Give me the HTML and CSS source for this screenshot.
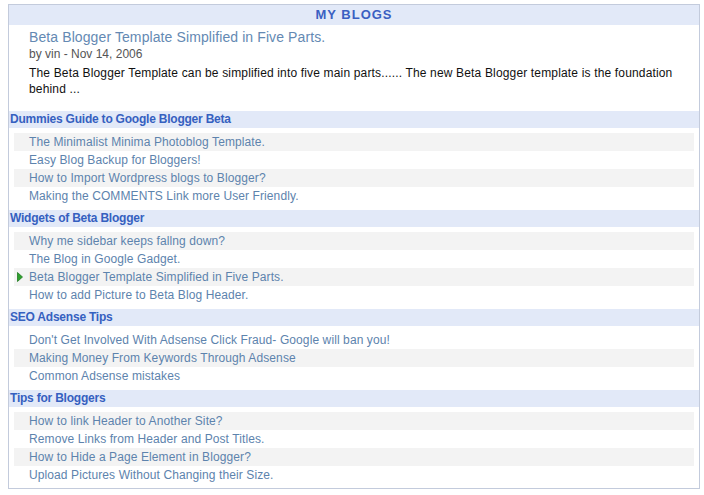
FILE: index.html
```html
<!DOCTYPE html>
<html>
<head>
<meta charset="utf-8">
<link rel="stylesheet" href="styles.css">
</head>
<body>
<div class="box">
  <div class="title-bar">MY BLOGS</div>
  <div class="post">
    <div class="post-title">Beta Blogger Template Simplified in Five Parts.</div>
    <div class="post-meta">by vin - Nov 14, 2006</div>
    <div class="post-desc">The Beta Blogger Template can be simplified into five main parts...... The new Beta Blogger template is the foundation behind ...</div>
  </div>

  <div class="section">
    <div class="sec-head">Dummies Guide to Google Blogger Beta</div>
    <ul class="items">
      <li class="alt">The Minimalist Minima Photoblog Template.</li>
      <li>Easy Blog Backup for Bloggers!</li>
      <li class="alt">How to Import Wordpress blogs to Blogger?</li>
      <li>Making the COMMENTS Link more User Friendly.</li>
    </ul>
  </div>

  <div class="section">
    <div class="sec-head">Widgets of Beta Blogger</div>
    <ul class="items">
      <li class="alt">Why me sidebar keeps fallng down?</li>
      <li>The Blog in Google Gadget.</li>
      <li class="alt current"><svg class="arrow" width="6" height="10" viewBox="0 0 6 10"><polygon points="0.5,0.5 5.5,5 0.5,9.5" fill="#2ea02e" stroke="#1f7a1f" stroke-width="0.8"/></svg>Beta Blogger Template Simplified in Five Parts.</li>
      <li>How to add Picture to Beta Blog Header.</li>
    </ul>
  </div>

  <div class="section">
    <div class="sec-head">SEO Adsense Tips</div>
    <ul class="items">
      <li>Don't Get Involved With Adsense Click Fraud- Google will ban you!</li>
      <li class="alt">Making Money From Keywords Through Adsense</li>
      <li>Common Adsense mistakes</li>
    </ul>
  </div>

  <div class="section">
    <div class="sec-head">Tips for Bloggers</div>
    <ul class="items">
      <li class="alt">How to link Header to Another Site?</li>
      <li>Remove Links from Header and Post Titles.</li>
      <li class="alt">How to Hide a Page Element in Blogger?</li>
      <li>Upload Pictures Without Changing their Size.</li>
    </ul>
  </div>
</div>
</body>
</html>
```

FILE: styles.css
```css
html, body {
  background: #ffffff;
}
body {
  margin: 4px 0 0 8px;
  font-family: "Liberation Sans", Arial, sans-serif;
  font-size: 12px;
}
.box {
  width: 690px;
  border: 1px solid #c3cbdc;
  padding-bottom: 4px;
}
.title-bar {
  background: #e2e9f8;
  height: 20px;
  line-height: 20px;
  text-align: center;
  font-weight: bold;
  font-size: 13px;
  letter-spacing: 1px;
  color: #3a5fc2;
}
.post {
  padding: 3px 0 9px 20px;
}
.post-title {
  font-size: 14px;
  line-height: 18px;
  letter-spacing: 0.1px;
  color: #6489b3;
}
.post-meta {
  line-height: 16px;
  color: #555555;
}
.post-desc {
  margin-top: 3px;
  line-height: 16px;
  letter-spacing: 0.16px;
  color: #111111;
}
.section {
  margin-top: 5px;
}
.sec-head {
  background: #e2e9f8;
  height: 17px;
  line-height: 17px;
  padding-left: 1px;
  font-weight: bold;
  letter-spacing: -0.22px;
  color: #3560c0;
}
.items {
  list-style: none;
  margin: 5px 5px 0 5px;
  padding: 0;
}
.items li {
  position: relative;
  height: 18px;
  line-height: 18px;
  padding-left: 15px;
  letter-spacing: 0.1px;
  color: #5d83ad;
}
.items li.alt {
  background: #f3f3f3;
}
.arrow {
  position: absolute;
  left: 3px;
  top: 4px;
}
```
